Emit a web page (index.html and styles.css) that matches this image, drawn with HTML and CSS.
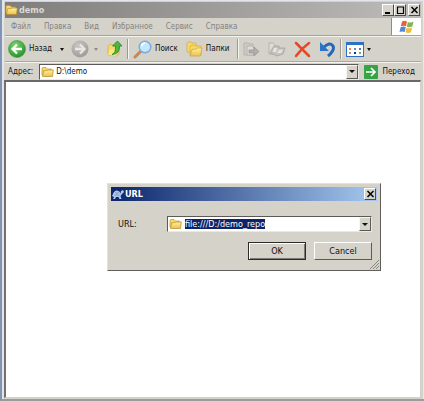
FILE: index.html
```html
<!DOCTYPE html>
<html lang="ru">
<head>
<meta charset="utf-8">
<title>demo</title>
<link rel="stylesheet" href="styles.css">
</head>
<body>
<svg width="0" height="0" class="defs" aria-hidden="true">
  <defs>
    <linearGradient id="fold" x1="0" y1="0" x2="0" y2="1"><stop offset="0" stop-color="#fdee9c"/><stop offset="1" stop-color="#ecc24c"/></linearGradient>
    <radialGradient id="green" cx=".4" cy=".3" r=".8"><stop offset="0" stop-color="#7fd66c"/><stop offset="1" stop-color="#1c8a25"/></radialGradient>
    <radialGradient id="grey" cx=".4" cy=".3" r=".8"><stop offset="0" stop-color="#c8c7c4"/><stop offset="1" stop-color="#979694"/></radialGradient>
    <symbol id="folder" viewBox="0 0 13 12">
      <path d="M1 9V2.500Q1 1.500 2 1.500H5L6.500 3H10.500L11 5V9Z" fill="#f3d767" stroke="#c29a35" stroke-width=".7"/>
      <path d="M1.500 10.500L2.500 4.800L6 4.500L7 4H12.300L11.500 10.500Z" fill="url(#fold)" stroke="#b58c2c" stroke-width=".7"/>
    </symbol>
  </defs>
</svg>
<main class="window">
  <header class="title">
    <svg class="folder"><use href="#folder"/></svg>
    <h1>demo</h1>
    <div class="controls">
      <button class="cap" aria-label="Свернуть"><svg viewBox="0 0 9 8"><path d="M1 7H6" stroke="#000" stroke-width="2"/></svg></button>
      <button class="cap" aria-label="Развернуть"><svg viewBox="0 0 9 8"><path d="M1 1H8M1.500 1V7.500H7.500V1" fill="none" stroke="#000" stroke-width="1.200"/></svg></button>
      <button class="cap gap" aria-label="Закрыть"><svg viewBox="0 0 9 8"><path d="M1.500 1L7.500 7M7.500 1L1.500 7" stroke="#000" stroke-width="1.500"/></svg></button>
    </div>
  </header>
  <nav class="menu">
    <button>Файл</button><button>Правка</button><button>Вид</button><button>Избранное</button><button>Сервис</button><button>Справка</button>
    <div class="flag"><svg width="16" height="14" viewBox="0 0 16 14">
      <path d="M3 1.500Q5.500 0 8 1.500L7 6.300Q4.500 5 1.800 6.300Z" fill="#e5633a"/>
      <path d="M8.800 2Q11.500 3.300 14.500 1.800L13.300 6.500Q10.800 8 7.900 6.700Z" fill="#82b450"/>
      <path d="M1.600 7.200Q4.300 6 6.800 7.300L5.700 12Q3 10.800.5 12Z" fill="#5687d0"/>
      <path d="M7.600 7.700Q10.500 9 13.100 7.500L12 12.200Q9.300 13.500 6.500 12.300Z" fill="#efbd3d"/>
    </svg></div>
  </nav>
  <div class="tools">
    <button><svg width="18" height="18" viewBox="0 0 18 18"><circle cx="9" cy="9" r="8.500" fill="url(#green)" stroke="#3c9a3c" stroke-width=".6"/><path d="M14 9H5M9 4.500L4.500 9L9 13.500" fill="none" stroke="#fff" stroke-width="2.300"/></svg><span class="back">Назад</span><i class="tri"></i></button>
    <button class="fwd" aria-label="Вперед" disabled><svg width="18" height="18" viewBox="0 0 18 18"><circle cx="9" cy="9" r="8.500" fill="url(#grey)"/><path d="M4 9H13M9 4.500L13.500 9L9 13.500" fill="none" stroke="#e8e7e2" stroke-width="2.300"/></svg><i class="tri pale"></i></button>
    <button class="up" aria-label="Вверх"><svg width="16" height="18" viewBox="0 0 16 18"><path d="M1 6L3 4L6 5L12 7V14L9 16L1 15Z" fill="#f2d868" stroke="#c9a640" stroke-width=".6"/><path d="M3 9L10 10L9 16L1 15Z" fill="#f9e684"/><path d="M5 14.500Q9 13 8.500 6H5.500L10.500 1L15 6H12.500Q13 14 5 14.500Z" fill="#4fb53f" stroke="#218629" stroke-width=".8"/></svg></button>
    <span class="rule"></span>
    <button class="search"><svg width="19" height="19" viewBox="0 0 19 19"><path d="M2 17L8 11" stroke="#c88555" stroke-width="3" stroke-linecap="round"/><circle cx="12" cy="7" r="5.800" fill="#c3e7fc" stroke="#77aadd" stroke-width="1.400"/><path d="M8.500 6Q9 3.500 12 3.200" stroke="#fff" stroke-width="1.800" fill="none"/></svg><span>Поиск</span></button>
    <button class="folders"><svg width="17" height="16" viewBox="0 0 17 16"><path d="M1 11V2L2 1H5L6 2H10V11Z" fill="#f6d965" stroke="#d3aa45" stroke-width=".7"/><path d="M4 14V5L6 4H8L9 5H15V14Z" fill="#f6d965" stroke="#d3aa45" stroke-width=".7"/><path d="M4 15L6 8.500L10 8L11 7H16L14.500 15Z" fill="url(#fold)" stroke="#cfa23a" stroke-width=".7"/></svg><span>Папки</span></button>
    <span class="rule"></span>
    <button class="act" aria-label="Переместить" disabled><svg width="17" height="17" viewBox="0 0 17 17"><path d="M1 2H5L6 3H10V14H1Z" fill="#cccbc6" stroke="#b4b3af"/><path d="M4 5H9L11 7V14H4Z" fill="#dddcd7" stroke="#b4b3af"/><path d="M6 9H11V6L16 10.500L11 15V12H6Z" fill="#b0afab" stroke="#949390" stroke-width=".7"/></svg></button>
    <button class="act" aria-label="Копировать" disabled><svg width="18" height="17" viewBox="0 0 18 17"><path d="M1 2H5L7 4V13H1Z" fill="#dddcd7" stroke="#b4b3af"/><path d="M4 8L6 5H11V7H17L15 13L9 15L5 13L2 12Z" fill="#c4c3bf" stroke="#a3a29e" stroke-width=".8"/><path d="M6 7H9L8 11H5ZM11 9L15 8.500L13 12H9Z" fill="#e5e4df"/></svg></button>
    <button class="act" aria-label="Удалить"><svg width="17" height="17" viewBox="0 0 17 17"><path d="M2 2Q8 8 15 15M15 2Q7 8 2 15" fill="none" stroke="#e2492b" stroke-width="2.500" stroke-linecap="round"/></svg></button>
    <button class="act undo" aria-label="Отменить"><svg width="17" height="17" viewBox="0 0 17 17"><path d="M4 7Q11 0 14 5Q16 9 9 15" fill="none" stroke="#2368bb" stroke-width="3"/><path d="M1 1V10H10Z" fill="#2b75c9"/></svg></button>
    <span class="rule"></span>
    <button class="views" aria-label="Вид"><svg width="18" height="15" viewBox="0 0 18 15"><rect x=".5" y=".5" width="17" height="14" fill="#fff" stroke="#2e72c8"/><path d="M0 1.500H18" stroke="#2e72c8" stroke-width="3"/><path d="M3 7H5M3 11H5" stroke="#d58572" stroke-width="2"/><path d="M8 7H10" stroke="#5a8fd0" stroke-width="2"/><path d="M8 11H10" stroke="#123b87" stroke-width="2"/><path d="M13 7H15" stroke="#477bbd" stroke-width="2"/><path d="M13 11H15" stroke="#7daa6a" stroke-width="2"/></svg><i class="tri"></i></button>
  </div>
  <div class="address">
    <label for="addr">Адрес:</label>
    <div class="combo"><svg class="folder"><use href="#folder"/></svg><input id="addr" value="D:\demo"><button class="drop" aria-label="Список адресов"><i class="tri"></i></button></div>
    <button class="go"><svg width="14" height="14" viewBox="0 0 14 14"><rect width="14" height="14" rx="1" fill="#35a445"/><path d="M2 7H10M7 3L11 7L7 11" fill="none" stroke="#fff" stroke-width="1.700"/></svg><span>Переход</span></button>
  </div>
  <section class="files" aria-label="demo"></section>
</main>
<div class="dialog" role="dialog" aria-label="URL">
  <header class="dtitle">
    <svg width="12" height="11" viewBox="0 0 12 11"><path d="M0 7L1 5Q2 1.500 5 1.500Q8 2 8.500 4.500L9 2L11 1L12 3L10 5L8.500 7L9.500 10H7.500L6.500 8H4L3 10H1L2 8Z" fill="#b3c6ea"/><path d="M3.500 3L5 5L6.500 3M2.500 6H7.500" fill="none" stroke="#5c7fbe" stroke-width=".6"/></svg>
    <h2>URL</h2>
    <button class="cap" aria-label="Закрыть"><svg viewBox="0 0 9 8"><path d="M1.500 1L7.500 7M7.500 1L1.500 7" stroke="#000" stroke-width="1.500"/></svg></button>
  </header>
  <div class="field"><label for="url">URL:</label>
    <div class="combo"><svg class="folder"><use href="#folder"/></svg><div id="url" class="edit" role="textbox" contenteditable="true" aria-label="URL"><mark>file:///D:/demo_repo</mark></div><button class="drop" aria-label="Список URL"><i class="tri"></i></button></div>
  </div>
  <div class="answers"><button class="push default">OK</button><button class="push">Cancel</button></div>
  <svg class="grip" width="9" height="9" viewBox="0 0 9 9"><path d="M0 9L9 0M3 9L9 3M6 9L9 6" stroke="#8b8983" stroke-width="1"/></svg>
</div>
</body>
</html>
```
FILE: styles.css
```css
* { box-sizing: border-box; }
body {
  margin: 0;
  height: 100vh;
  display: flex;
  font: 8px/12px "DejaVu Sans Condensed", "DejaVu Sans", sans-serif;
  color: #111;
  background: #d5d2ca;
}
.defs { position: absolute; }
button { font: inherit; color: inherit; background: none; border: 0; padding: 0; display: flex; align-items: center; }
h1, h2 { margin: 0; font: bold 9px/12px "DejaVu Sans Condensed", sans-serif; }
svg { flex: none; }
.folder { width: 13px; height: 12px; }

.window {
  flex: 1;
  min-width: 0;
  display: flex;
  flex-direction: column;
  border-left: 2px solid #8294b4;
  border-bottom: 2px solid #9b9b9b;
  padding: 2px 3px 1px 2px;
  box-shadow: inset 2px 1px #e3e5ec, inset -1px 0 #e9e8e4;
}
.title {
  height: 16px;
  flex: none;
  display: flex;
  align-items: center;
  gap: 1px;
  margin-left: 1px;
  padding: 0 1px 0 0;
  color: #dbd9d4;
  background: linear-gradient(90deg, #7e7d7b, #bdbcb9);
}
.controls { margin-left: auto; display: flex; }
.cap {
  width: 12px;
  height: 12px;
  justify-content: center;
  background: #d6d3cb;
  border: 1px solid;
  border-color: #fff #4c4b49 #4c4b49 #fff;
}
.cap svg { width: 9px; height: 8px; }
.gap { margin-left: 2px; }

.menu {
  height: 18px;
  flex: none;
  display: flex;
  align-items: center;
  gap: 13px;
  padding-left: 6px;
  margin-left: 1px;
  color: #85837e;
  border-bottom: 1px solid #a5a39e;
}
.flag {
  margin-left: auto;
  width: 30px;
  align-self: stretch;
  display: flex;
  align-items: center;
  justify-content: center;
  background: #fff;
  border-left: 1px solid #8f8d88;
}
.tools {
  height: 26px;
  flex: none;
  display: flex;
  align-items: center;
  padding-left: 3px;
  margin-left: 1px;
  border-top: 1px solid #f4f3ee;
  border-bottom: 1px solid #aaa7a1;
}
.tools button { gap: 3px; }
.tri { border: 2px solid transparent; border-top: 3px solid #111; border-bottom: 0; }
.pale { border-top-color: #8e8c88; }
.back { margin-right: 5px; }
.tools .fwd { gap: 5px; margin-left: 7px; }
.tools .up { margin-left: 9px; }
.rule { width: 2px; height: 20px; margin: 0 4px; flex: none; border-left: 1px solid #9b9994; border-right: 1px solid #f7f6f2; }
.folders { margin-left: 8px; }
.folders + .rule { margin: 0 4px 0 8px; }
.act { margin-right: 8px; }
.undo { margin-right: 0; }

.address {
  height: 18px;
  flex: none;
  display: flex;
  align-items: center;
  padding: 0 6px 0 3px;
  margin-left: 1px;
  border-top: 1px solid #f4f3ee;
}
.combo {
  flex: 1;
  min-width: 0;
  height: 16px;
  display: flex;
  align-items: center;
  gap: 3px;
  padding-left: 1px;
  background: #fff;
  border: 1px solid;
  border-color: #5b5a57 #ebe9e3 #ebe9e3 #5b5a57;
}
.address .combo { margin: 0 5px 0 6px; gap: 2px; }
.combo input, .edit { flex: 1; min-width: 0; border: 0; padding: 0; font: inherit; color: #111; background: none; outline: 0; }
.drop {
  width: 12px;
  align-self: stretch;
  justify-content: center;
  background: #d6d3cb;
  border: 1px solid;
  border-color: #f7f6f2 #5b5a57 #5b5a57 #f7f6f2;
}
.drop .tri { border-width: 3px 3px 0; }
.go { gap: 5px; }
.files {
  flex: 1;
  background: #fff;
  border: 1px solid #d3d1cc;
  border-top: 2px solid #6a6967;
  border-left: 2px solid #77716e;
}

.dialog {
  position: absolute;
  top: 183px;
  left: 107px;
  width: 274px;
  padding: 3px 3px 10px;
  font-size: 9px;
  background: #d5d2c9;
  border: 1px solid;
  border-color: #e4e2dc #5f5e5b #5f5e5b #e4e2dc;
}
.dtitle {
  display: flex;
  align-items: center;
  gap: 1px;
  height: 14px;
  padding: 0 1px;
  color: #fff;
  background: linear-gradient(90deg, #0b246a, #a5c9f0);
}
.dtitle .cap { margin-left: auto; }
.field { display: flex; align-items: center; margin: 15px 5px 0 7px; }
.field label { width: 49px; }
mark { color: #fff; background: #0b246a; }
.answers { display: flex; justify-content: flex-end; gap: 8px; margin: 10px 5px 0; }
.push {
  width: 58px;
  height: 18px;
  justify-content: center;
  border: 1px solid;
  border-color: #fff #5b5a57 #5b5a57 #fff;
}
.default { border-color: #2d2c2a; box-shadow: inset 1px 1px #fff, inset -1px -1px #7c7a75; }
.grip { position: absolute; right: 1px; bottom: 1px; }
```
